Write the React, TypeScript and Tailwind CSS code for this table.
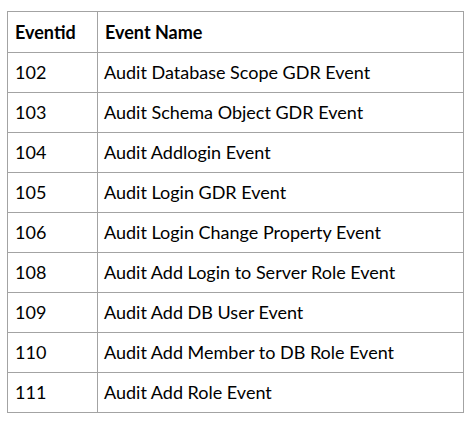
import React from "react";

const rows: [string, string][] = [
  ["102", "Audit Database Scope GDR Event"],
  ["103", "Audit Schema Object GDR Event"],
  ["104", "Audit Addlogin Event"],
  ["105", "Audit Login GDR Event"],
  ["106", "Audit Login Change Property Event"],
  ["108", "Audit Add Login to Server Role Event"],
  ["109", "Audit Add DB User Event"],
  ["110", "Audit Add Member to DB Role Event"],
  ["111", "Audit Add Role Event"],
];

export default function App() {
  return (
    <div className="w-[473px] h-[422px] bg-white pt-[11px] pl-[7px]" style={{ fontFamily: "Lato, 'Open Sans', sans-serif" }}>
      <div className="w-[457px] border border-[#a3a3a3] text-black text-[18px]">
        <div className="grid grid-cols-[90px_1fr] h-[40px]">
          <div className="border-r border-[#a3a3a3] flex items-center pl-[7px] font-bold">Eventid</div>
          <div className="flex items-center pl-[7px] font-bold">Event Name</div>
        </div>
        {rows.map(([id, name], i) => (
          <div key={id} className={`grid grid-cols-[90px_1fr] border-t border-[#a3a3a3] ${i === rows.length - 1 ? "h-[40px]" : "h-[40px]"}`}>
            <div className="border-r border-[#a3a3a3] flex items-center pl-[7px]">{id}</div>
            <div className="flex items-center pl-[6px]">{name}</div>
          </div>
        ))}
      </div>
    </div>
  );
}
